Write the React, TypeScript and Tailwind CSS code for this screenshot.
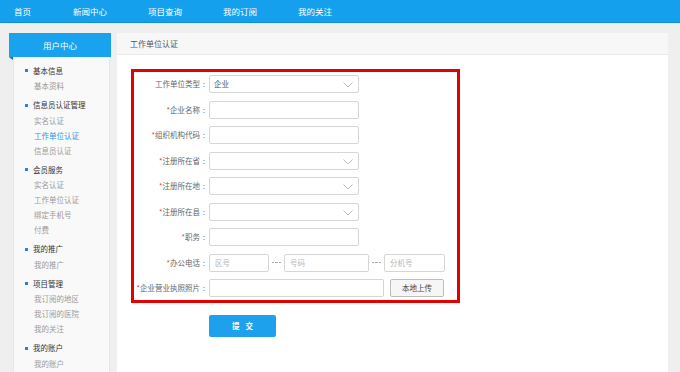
import React from "react";

const nav: [string, string][] = [
  ["首页", "w-[59px]"],
  ["新闻中心", "w-[75px]"],
  ["项目查询", "w-[75px]"],
  ["我的订阅", "w-[75px]"],
  ["我的关注", "w-[75px]"],
];

const sections: { title: string; items: string[] }[] = [
  { title: "基本信息", items: ["基本资料"] },
  { title: "信息员认证管理", items: ["实名认证", "工作单位认证", "信息员认证"] },
  { title: "会员服务", items: ["实名认证", "工作单位认证", "绑定手机号", "付费"] },
  { title: "我的推广", items: ["我的推广"] },
  { title: "项目管理", items: ["我订阅的地区", "我订阅的医院", "我的关注"] },
  { title: "我的账户", items: ["我的账户"] },
];

function Chevron() {
  return (
    <svg width="10" height="6" viewBox="0 0 10 6" className="absolute right-[5px] top-[6px]">
      <polyline points="0.5,0.5 5,5 9.5,0.5" fill="none" stroke="#b5b5b5" strokeWidth="0.9" />
    </svg>
  );
}

function Label({ text, star = true }: { text: string; star?: boolean }) {
  return (
    <div className="w-[75px] shrink-0 flex justify-end text-[7.5px] leading-[18px] text-[#666] whitespace-nowrap pr-[1px]">
      {star && <span className="text-[#e33]">*</span>}
      <span>{text}</span>
      <span className="w-[8px] text-center">:</span>
    </div>
  );
}

function Box({ w, children, placeholder }: { w: string; children?: React.ReactNode; placeholder?: string }) {
  return (
    <div
      className={`relative ${w} h-[18px] border border-[#d6d6d6] rounded-[2px] bg-white text-[7.5px] leading-[16px] pl-[4px] text-[#555]`}
    >
      {placeholder && <span className="text-[#b8b8b8] pl-[1px]">{placeholder}</span>}
      {children}
    </div>
  );
}

function Dash() {
  return (
    <div className="w-[15px] shrink-0 flex items-center justify-center gap-[1px]">
      <span className="w-[2.5px] h-[1px] bg-[#aaa]" />
      <span className="w-[2.5px] h-[1px] bg-[#aaa]" />
      <span className="w-[2.5px] h-[1px] bg-[#aaa]" />
    </div>
  );
}

export default function App() {
  return (
    <div className="w-[680px] h-[372px] overflow-hidden bg-[#efefef] font-['Noto_Sans_CJK_SC','Noto_Sans',sans-serif]">
      {/* top nav */}
      <div className="h-[23px] bg-[#15a0ee] border-b border-[#0e8fda] flex items-center pl-[14px]">
        {nav.map(([t, w]) => (
          <div key={t} className={`${w} text-[8.5px] text-white leading-[22px]`}>
            {t}
          </div>
        ))}
      </div>
      <div className="h-[1px] bg-[#d8edf9]" />

      <div className="flex pt-[9px]">
        {/* sidebar */}
        <div className="ml-[9px] w-[102px] shrink-0 flex flex-col">
          <div className="relative h-[24px] bg-[#19a2ee] text-white text-[8.5px] flex items-center justify-center">
            用户中心
            <div className="absolute left-0 top-full w-0 h-0 border-t-[3px] border-t-[#0c6fa8] border-l-[4px] border-l-transparent" />
          </div>
          <div className="ml-[4px] w-[97px] h-[400px] bg-[#f9f9f9] border-x border-[#e6e6e6] pt-[6px]">
            {sections.map((s, i) => (
              <div key={s.title} className={i > 0 ? "mt-[4.5px]" : ""}>
                <div className="h-[15px] flex items-center pl-[11px]">
                  <span className="w-[3px] h-[3px] bg-[#2a83c6]" />
                  <span className="ml-[5px] text-[7.5px] text-[#333]">{s.title}</span>
                </div>
                {s.items.map((it, j) => (
                  <div
                    key={j}
                    className={`h-[15px] leading-[15px] pl-[20px] text-[7.5px] ${
                      i === 1 && j === 1 ? "text-[#1a9be6]" : "text-[#9a9a9a]"
                    }`}
                  >
                    {it}
                  </div>
                ))}
              </div>
            ))}
          </div>
        </div>

        {/* main */}
        <div className="ml-[6px] w-[551px] shrink-0 bg-white h-[400px] flex flex-col">
          <div className="h-[22px] bg-[#f7f7f7] border-b border-[#e9e9e9] pl-[13px] flex items-center text-[8px] text-[#555]">
            工作单位认证
          </div>

          <div className="ml-[14px] mt-[14px] w-[329px] border-[3px] border-[#e30000] pt-[3px] pb-[3px] flex flex-col gap-[7.5px]">
            <div className="flex">
              <Label text="工作单位类型" star={false} />
              <Box w="w-[150px]">
                企业
                <Chevron />
              </Box>
            </div>
            <div className="flex">
              <Label text="企业名称" />
              <Box w="w-[150px]" />
            </div>
            <div className="flex">
              <Label text="组织机构代码" />
              <Box w="w-[150px]" />
            </div>
            <div className="flex">
              <Label text="注册所在省" />
              <Box w="w-[150px]">
                <Chevron />
              </Box>
            </div>
            <div className="flex">
              <Label text="注册所在地" />
              <Box w="w-[150px]">
                <Chevron />
              </Box>
            </div>
            <div className="flex">
              <Label text="注册所在县" />
              <Box w="w-[150px]">
                <Chevron />
              </Box>
            </div>
            <div className="flex">
              <Label text="职务" />
              <Box w="w-[150px]" />
            </div>
            <div className="flex">
              <Label text="办公电话" />
              <Box w="w-[60px]" placeholder="区号" />
              <Dash />
              <Box w="w-[85px]" placeholder="号码" />
              <Dash />
              <Box w="w-[61px]" placeholder="分机号" />
            </div>
            <div className="flex">
              <Label text="企业营业执照照片" />
              <Box w="w-[175px]" />
              <button className="ml-[6px] w-[54px] h-[18px] border border-[#bdbdbd] rounded-[2px] bg-[#f6f6f6] text-[7.5px] text-[#444] leading-[16px]">
                本地上传
              </button>
            </div>
          </div>

          <button className="ml-[92px] mt-[12px] w-[67px] h-[22px] rounded-[2px] bg-[#1da1ec] text-white text-[7.5px] font-bold flex items-center justify-center gap-[6px]">
            <span>提</span>
            <span>交</span>
          </button>
        </div>
      </div>
    </div>
  );
}
